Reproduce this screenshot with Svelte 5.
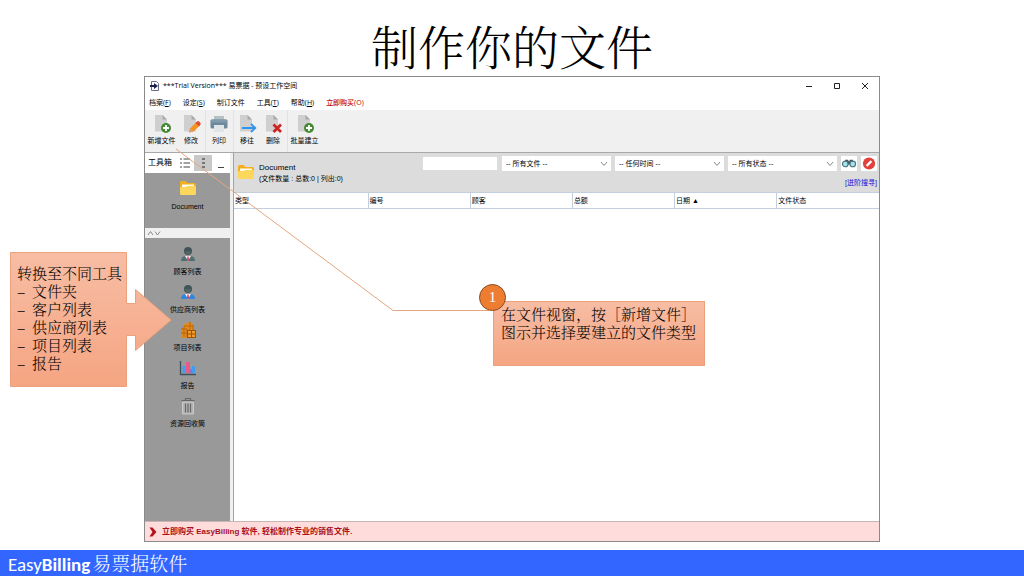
<script>
let keyword = '';
let docType = 'all';
let period = 'any';
let status = 'all';

const menus = [
    { text: '档案', key: 'F' },
    { text: '设定', key: 'S' },
    { text: '制订文件' },
    { text: '工具', key: 'T' },
    { text: '帮助', key: 'H' }
];

//Toolbar buttons, grouped between the separators
const toolGroups = [
    [{ text: '新增文件', icon: 'add', wide: true }, { text: '修改', icon: 'edit' }],
    [{ text: '列印', icon: 'print' }],
    [{ text: '移往', icon: 'move' }, { text: '删除', icon: 'delete' }],
    [{ text: '批量建立', icon: 'add', wide: true }]
];

const sideItems = [
    { text: '顾客列表', icon: 'person', color: '#4f6f73' },
    { text: '供应商列表', icon: 'person', color: '#2f86e0' },
    { text: '项目列表', icon: 'boxes' },
    { text: '报告', icon: 'chart' },
    { text: '资源回收筒', icon: 'trash' }
];

const columns = ['类型', '编号', '顾客', '总额', '日期 ▲', '文件状态'];

const targets = ['文件夹', '客户列表', '供应商列表', '项目列表', '报告'];
</script>

{#snippet folder()}
<svg class="folder" viewBox="0 0 18 16" aria-hidden="true">
    <path d="M1 2.500Q1 1 2.500 1H6.500L8.500 3H15.500Q17 3 17 4.500V9H1Z" fill="#f2b01e" />
    <rect x="3" y="4.500" width="12" height="5" fill="#fffbea" />
    <path d="M1 8Q1 7 2 7H7L8.500 6H16Q17 6 17 7V13.500Q17 15 15.500 15H2.500Q1 15 1 13.500Z" fill="#fdd75c" />
</svg>
{/snippet}

{#snippet toolIcon(name)}
<svg class="tool-icon" viewBox="0 0 20 20" aria-hidden="true">
    {#if name === 'print'}
    <rect x="5" y="2" width="10" height="5" fill="#b5bfc6" />
    <rect x="1.500" y="5.500" width="17" height="9" rx="1.500" fill="#6d899b" />
    <rect x="1.500" y="5.500" width="17" height="3" rx="1.500" fill="#829baa" />
    <rect x="5" y="11" width="10" height="7" fill="#dfe5e9" />
    {:else}
    <path d="M3 1H10.500L15 5.500V17.500H3Z" fill="#cfcfcf" />
    <path d="M10.500 1L15 5.500H10.500Z" fill="#a9a9a9" />
    {#if name === 'add'}
    <circle cx="14" cy="14" r="5" fill="#448b34" />
    <path d="M14 11V17M11 14H17" stroke="#fff" stroke-width="1.800" />
    {:else if name === 'edit'}
    <path d="M8 18.500L9 14.500L15.500 8L19 11.500L12.500 17.500Z" fill="#f49320" />
    <path d="M14.500 9L16 7.500Q17 6.500 18 7.500L19.500 9Q20 10 19.500 10.500L18 12.300Z" fill="#dd4a35" />
    <path d="M8 18.500L9 14.500L12.500 17.500Z" fill="#d8a173" />
    {:else if name === 'move'}
    <path d="M5 14H18M14 10L18.300 14L14 18" fill="none" stroke="#2f94ee" stroke-width="1.800" />
    {:else if name === 'delete'}
    <path d="M10.500 10.500L18 18M18 10.500L10.500 18" stroke="#cf2424" stroke-width="2.800" />
    {/if}
    {/if}
</svg>
{/snippet}

{#snippet sideIcon(item)}
<svg class="side-icon" viewBox="0 0 18 18" aria-hidden="true">
    {#if item.icon === 'person'}
    <path d="M2 16Q2 11.500 6.500 11H11.500Q16 11.500 16 16Z" fill={item.color} />
    <path d="M6 11H12L9 16Z" fill="#f4eef0" />
    <path d="M8.400 11.500H9.600L10 15L9 16L8 15Z" fill="#d33b55" />
    <circle cx="9" cy="6" r="4" fill="#3f5459" />
    <path d="M6.500 6Q9 7 11.500 5.500V7Q11 9.500 9 9.500Q7 9.500 6.500 7Z" fill="#56676b" />
    {:else if item.icon === 'boxes'}
    <path d="M2 8L5 6V3L11 1L15 4V10H17V17H2Z" fill="#e28b1e" />
    <path d="M2 8H8V16M5 5H14M11 1V9M2 12H9M5 6V16M14 4V9" stroke="#b9670d" fill="none" />
    <rect x="8.500" y="9.500" width="8" height="7" fill="#f09a28" stroke="#9d5407" />
    <path d="M12.500 9.500V16.500M8.500 13H16.500" stroke="#9d5407" />
    {:else if item.icon === 'chart'}
    <path d="M1.500 2V15.500H17" fill="none" stroke="#3e5059" stroke-width="1.300" />
    <rect x="3.500" y="7" width="3" height="7" fill="#3f9cf0" />
    <rect x="7" y="3" width="4" height="11" fill="#e75b86" />
    <rect x="11" y="10" width="2" height="4" fill="#8d73c7" />
    <rect x="13" y="7" width="3" height="7" fill="#3f9cf0" />
    {:else}
    <path d="M2.500 3.500H15.500M6.500 3V1.500H11.500V3" fill="none" stroke="#666" stroke-width="1.200" />
    <path d="M3.500 5H14.500V17H3.500Z" fill="#b4b4b4" stroke="#c8c8c8" />
    <path d="M6.500 6.500V15.500M9 6.500V15.500M11.500 6.500V15.500" stroke="#666" stroke-width="1.200" />
    {/if}
</svg>
{/snippet}

{#snippet chevron()}
<svg class="chevron" viewBox="0 0 8 6" aria-hidden="true"><path d="M1 1L4 4.500L7 1" fill="none" stroke="#888" /></svg>
{/snippet}

<div class="slide">
    <h1>制作你的文件</h1>

    <div class="window">
        <div class="titlebar">
            <svg class="app-icon" viewBox="0 0 10 10" aria-hidden="true">
                <path d="M1.500 0.500H6.500L8.500 2.500V9.500H1.500Z" fill="#fff" stroke="#6b6f86" />
                <path d="M0 4H4V2L8 5L4 8V6H0Z" fill="#1c2250" />
            </svg>
            <span class="caption">***Trial Version*** 易票据 - 预设工作空间</span>
            <button aria-label="最小化"><svg viewBox="0 0 8 8"><path d="M1 4.500H7" /></svg></button>
            <button aria-label="最大化"><svg viewBox="0 0 8 8"><path d="M1.500 1.500H6.500V6.500H1.500Z" /></svg></button>
            <button aria-label="关闭"><svg viewBox="0 0 8 8"><path d="M1 1L7 7M7 1L1 7" /></svg></button>
        </div>

        <nav class="menubar">
            {#each menus as menu}
            <button>{menu.text}{#if menu.key}(<u>{menu.key}</u>){/if}</button>
            {/each}
            <button class="buy">立即购买(O)</button>
        </nav>

        <div class="toolbar">
            {#each toolGroups as group}
            <div class="group">
                {#each group as tool}
                <button class:wide={tool.wide}>
                    {@render toolIcon(tool.icon)}
                    <span>{tool.text}</span>
                </button>
                {/each}
            </div>
            {/each}
        </div>

        <div class="body">
            <aside>
                <div class="side-head">
                    <span>工具箱</span>
                    <button aria-label="列表"><svg viewBox="0 0 12 12"><path d="M1 2H3M1 6H3M1 10H3M4.500 2H11M4.500 6H11M4.500 10H11" /></svg></button>
                    <button class="on" aria-label="图示"><svg viewBox="0 0 12 12"><path d="M5 2H8M5 6H8M5 10H8" stroke="#777" stroke-width="2" /></svg></button>
                    <button aria-label="收起"><svg viewBox="0 0 12 12"><path d="M3 10.500H9" /></svg></button>
                </div>
                <div class="panel folders">
                    <button>{@render folder()}<span>Document</span></button>
                </div>
                <div class="splitter">
                    <svg viewBox="0 0 14 6" aria-hidden="true"><path d="M1 5L3.500 1.500L6 5M8 1.500L10.500 5L13 1.500" fill="none" stroke="#888" /></svg>
                </div>
                <div class="panel lists">
                    {#each sideItems as item}
                    <button>{@render sideIcon(item)}<span>{item.text}</span></button>
                    {/each}
                </div>
            </aside>

            <main>
                <header>
                    {@render folder()}
                    <div class="summary">
                        <span class="name">Document</span>
                        <span>(文件数量 : 总数:0 | 列出:0)</span>
                    </div>
                    <div class="search">
                        <div class="filters">
                            <input type="text" aria-label="关键字" bind:value={keyword} />
                            <label>
                                <select aria-label="文件" bind:value={docType}><option value="all">-- 所有文件 --</option></select>
                                {@render chevron()}
                            </label>
                            <label>
                                <select aria-label="时间" bind:value={period}><option value="any">-- 任何时间 --</option></select>
                                {@render chevron()}
                            </label>
                            <label>
                                <select aria-label="状态" bind:value={status}><option value="all">-- 所有状态 --</option></select>
                                {@render chevron()}
                            </label>
                            <button aria-label="搜寻">
                                <svg viewBox="0 0 16 16" aria-hidden="true">
                                    <path d="M4 4H7L8 6L9 4H12L13 9H3Z" fill="#41555c" />
                                    <circle cx="4" cy="8.500" r="3" fill="#a5e1ec" stroke="#4d7580" stroke-width="1.200" />
                                    <circle cx="12" cy="8.500" r="3" fill="#a5e1ec" stroke="#4d7580" stroke-width="1.200" />
                                </svg>
                            </button>
                            <button aria-label="清除">
                                <svg viewBox="0 0 16 16" aria-hidden="true">
                                    <circle cx="8" cy="8" r="6.500" fill="#e2403c" />
                                    <path d="M5.500 10.500L10.500 5.500" stroke="#fff" stroke-width="2.500" />
                                </svg>
                            </button>
                        </div>
                        <a href="#search">[进阶搜寻]</a>
                    </div>
                </header>
                <table>
                    <thead>
                        <tr>
                            {#each columns as column}
                            <th>{column}</th>
                            {/each}
                        </tr>
                    </thead>
                </table>
            </main>
        </div>

        <a class="promo" href="#buy">
            <svg viewBox="0 0 8 10" aria-hidden="true"><path d="M0.500 0.500H3.500L7.500 5L3.500 9.500H0.500L3.500 5Z" fill="#b3121d" /></svg>
            <span>立即购买 <b>EasyBilling</b> 软件, 轻松制作专业的销售文件.</span>
        </a>
    </div>

    <footer>Easy<b>Billing</b><span>易票据软件</span></footer>

    <svg class="pointer" viewBox="0 0 314 164" aria-hidden="true">
        <path d="M1 1L218 162.500H314" fill="none" stroke="#e3a77f" />
    </svg>

    <div class="callout tools">
        <svg viewBox="0 0 162 136" aria-hidden="true">
            <defs>
                <linearGradient id="salmon" x1="0" y1="0" x2="0" y2="1">
                    <stop offset="0" stop-color="#f7bda4" />
                    <stop offset="1" stop-color="#f5a582" />
                </linearGradient>
            </defs>
            <path d="M0.500 0.500H116.500V51.500H125.500V37.500L161 68L125.500 98.500V83.500H116.500V134.500H0.500Z" fill="url(#salmon)" stroke="#eda07c" />
        </svg>
        <div class="text">
            <p>转换至不同工具</p>
            <ul>
                {#each targets as target}
                <li>{target}</li>
                {/each}
            </ul>
        </div>
    </div>

    <div class="callout step">
        <span class="badge">1</span>
        <p>在文件视窗，按［新增文件］图示并选择要建立的文件类型</p>
    </div>
</div>

<style>
:global(body) {background: #fff;}

.slide {position: relative; display: flex; flex-direction: column; min-height: 100vh; overflow: hidden; color: #000;
        font-family: SimSun, "Noto Serif CJK SC", "Noto Sans CJK SC", serif;}

h1 {margin: 0; height: 76px; padding-top: 10px; box-sizing: border-box; text-align: center; font-size: 47px; line-height: 70px; font-weight: 300;}

button, input, select {margin: 0; padding: 0; border: 0; background: none; color: inherit; font: inherit;}

svg {display: block;}

.window {flex: 1; display: flex; flex-direction: column; margin: 0 144px 8px; border: 1px solid #8a8a8a; background: #fff;
        font-family: "Liberation Sans", "Noto Sans CJK SC", sans-serif; font-size: 7px; line-height: 10px;}

.titlebar {display: flex; align-items: center; height: 18px; padding-left: 5px;}
.app-icon {width: 10px; height: 10px; margin-right: 3px;}
.caption {flex: 1; font-family: "Open Sans", "Noto Sans CJK SC", sans-serif;}
.titlebar button {width: 28px; display: flex; justify-content: center;}
.titlebar button svg {width: 8px; height: 8px; fill: none; stroke: #222;}

.menubar {display: flex; gap: 12px; height: 15px; padding-left: 4px; font-family: "Open Sans", "Noto Sans CJK SC", sans-serif;}
.menubar .buy {color: #c00000; font-weight: 500;}

.toolbar {display: flex; height: 42px; background: #f0f0f0; border-bottom: 1px solid #a8a8a8;}
.group {display: flex; padding-right: 1px; border-right: 1px solid #e2e2e2;}
.group:last-child {border: 0;}
.toolbar button {display: flex; flex-direction: column; align-items: center; width: 26px; padding-top: 4px;}
.toolbar button.wide {width: 33px;}
.tool-icon {width: 20px; height: 20px; margin-bottom: 2px;}

.body {flex: 1; display: flex; background: #f0f0f0;}

aside {display: flex; flex-direction: column; width: 85px;}
.side-head {display: flex; align-items: center; height: 20px; padding-left: 3px; background: #fff;}
.side-head span {flex: 1; font-size: 8px;}
.side-head button {display: flex; align-items: center; justify-content: center; width: 18px; height: 16px;}
.side-head button.on {background: #c8c8c8;}
.side-head svg {width: 12px; height: 12px; fill: none; stroke: #444;}
.panel {background: #999;}
.panel button {display: flex; flex-direction: column; align-items: center; width: 100%;}
.folders {height: 55px; padding-top: 7px; box-sizing: border-box;}
.folders span {margin-top: 6px;}
.splitter {height: 10px; padding: 2px; box-sizing: border-box;}
.splitter svg {width: 14px; height: 6px;}
.lists {flex: 1; padding-top: 7px;}
.lists button {height: 38px;}
.side-icon {width: 18px; height: 18px; margin-bottom: 4px;}
.folder {width: 18px; height: 16px; flex: none;}

main {flex: 1; margin-left: 3px; border-left: 1px solid #9aa5b1; background: #fff;}
header {display: flex; height: 39px; padding: 3px 2px 0 3px; box-sizing: border-box; background: #dcdcdc;}
header .folder {margin-top: 8px;}
.summary {display: flex; flex-direction: column; margin: 6px 0 0 4px; line-height: 11px; white-space: nowrap;}
.summary .name {font-size: 8px;}
.search {flex: 1; display: flex; flex-direction: column; align-items: flex-end;}
.filters {display: flex; gap: 4px; height: 15px;}
.filters input {width: 76px; background: #fff; box-sizing: border-box; border: 1px solid #ddd;}
.filters label {position: relative; display: flex; width: 109px; background: #fff;}
.filters select {appearance: none; width: 100%; padding-left: 4px; line-height: 15px;}
.chevron {position: absolute; right: 3px; top: 5px; width: 8px; height: 6px; pointer-events: none;}
.filters button {width: 16px; background: #fff;}
.filters button svg {width: 16px; height: 15px;}
.search a {margin-top: 7px; color: #1a10d8; text-decoration: none;}

table {width: 100%; border-collapse: collapse; table-layout: fixed;}
th {height: 16px; padding: 0 1px; box-sizing: border-box; border: 1px solid #c3cfdd; border-left: 0; text-align: left; font-weight: normal;}
th:first-child {width: 134px;}
th:last-child {border-right: 0;}

.promo {display: flex; align-items: center; gap: 5px; height: 20px; padding-left: 4px; box-sizing: border-box; border-top: 1px solid #c9b4b4;
        background: #ffdcdc; color: #a8101a; text-decoration: none; font-size: 8px; font-weight: bold;}
.promo svg {width: 8px; height: 10px;}

footer {height: 26px; padding-left: 8px; background: #3366ff; color: #fff; font-family: Carlito, Lato, sans-serif; font-size: 19px; line-height: 26px;}
footer span {margin-left: 2px; font-family: SimSun, "Noto Serif CJK SC", "Noto Sans CJK SC", serif; font-weight: 300;}

/* annotations lying over the window */
.pointer {position: absolute; left: 175px; top: 148px; width: 314px; height: 164px;}

.callout {position: absolute; font-size: 15px; line-height: 18px; font-weight: 300;}
.callout p {margin: 0;}
.tools {left: 10px; top: 252px; width: 162px; height: 136px;}
.tools .text {position: absolute; left: 7px; top: 12px; white-space: nowrap;}
ul {margin: 0; padding: 0; list-style: none;}
li {display: flex;}
li::before {content: "–"; width: 15px;}

.step {left: 493px; top: 301px; width: 212px; min-height: 65px; padding: 3px 7px; box-sizing: border-box;
        border: 1px solid #eda07c; background: linear-gradient(#f7bda4, #f5a582);}
.badge {position: absolute; left: -15px; top: -18px; width: 27px; height: 27px; box-sizing: border-box; border: 1px solid #8a4a1c; border-radius: 50%;
        background: #ed7d31; color: #fff; text-align: center; line-height: 25px; font-family: "Liberation Serif", serif;}
</style>
